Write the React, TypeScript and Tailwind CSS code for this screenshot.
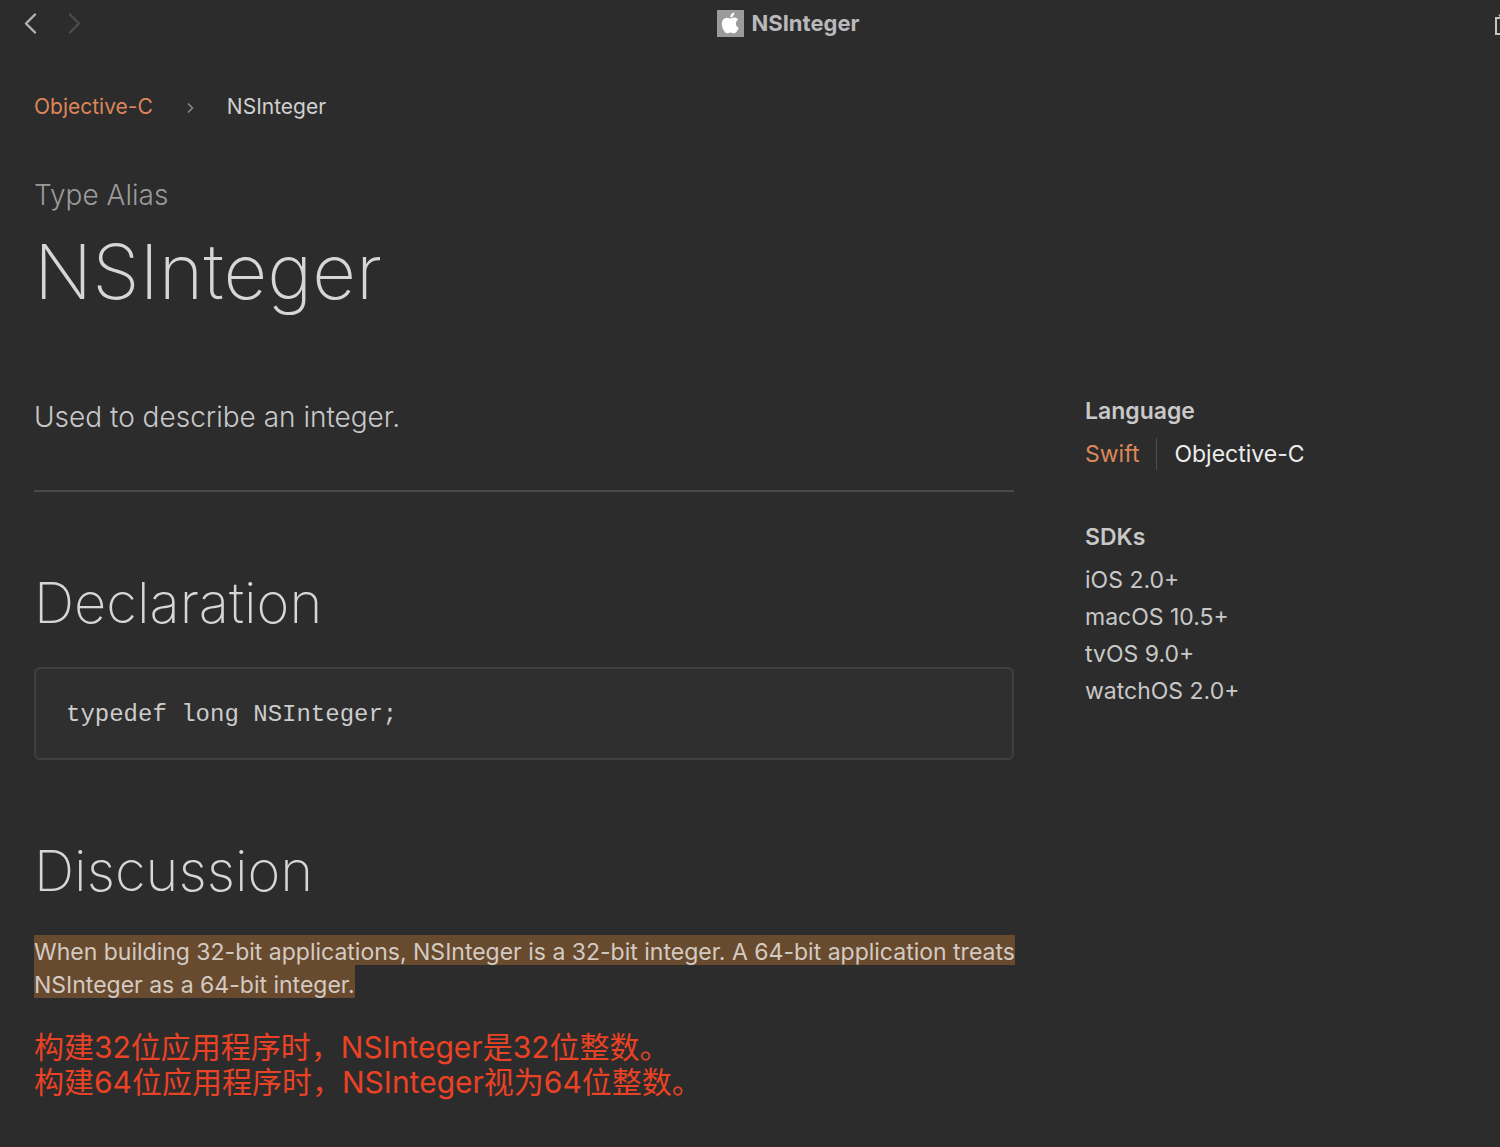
import React from 'react';

const sdks = ['iOS 2.0+', 'macOS 10.5+', 'tvOS 9.0+', 'watchOS 2.0+'];

const Chevron = ({ flip = false }: { flip?: boolean }) => (
    <svg width="14" height="22" viewBox="0 0 14 22" fill="none" stroke="currentColor" strokeWidth="2.4" strokeLinecap="round" strokeLinejoin="round">
        <path d={flip ? 'M2 1.5l9 9-9 9' : 'M11 1.5l-9 9 9 9'} />
    </svg>
);

const AppleBadge = () => (
    <svg width="27" height="27" viewBox="0 0 27 27" aria-hidden="true">
        <rect width="27" height="27" fill="#9b9b9b" />
        <path
            fill="#ffffff"
            transform="translate(2.9 2.6) scale(0.86)"
            d="M12.152 6.896c-.948 0-2.415-1.078-3.96-1.04-2.04.027-3.91 1.183-4.961 3.014-2.117 3.675-.546 9.103 1.519 12.09 1.013 1.454 2.208 3.09 3.792 3.039 1.52-.065 2.09-.987 3.935-.987 1.831 0 2.35.987 3.96.948 1.637-.026 2.676-1.48 3.676-2.948 1.156-1.688 1.636-3.325 1.662-3.415-.039-.013-3.182-1.221-3.22-4.857-.026-3.04 2.48-4.494 2.597-4.559-1.429-2.09-3.623-2.324-4.39-2.376-2-.156-3.675 1.09-4.61 1.09zM15.53 3.83c.843-1.012 1.4-2.427 1.245-3.83-1.207.052-2.662.805-3.532 1.818-.78.896-1.454 2.338-1.273 3.714 1.338.104 2.715-.688 3.559-1.701"
        />
    </svg>
);

const TitleBar = () => (
    <header className="flex h-[47px] items-center overflow-hidden">
        <div className="flex flex-1 items-center gap-[30px] pl-6">
            <button type="button" aria-label="Back" className="text-[#b4b4b4]">
                <Chevron />
            </button>
            <button type="button" aria-label="Forward" disabled className="text-[#4b4b4b]">
                <Chevron flip />
            </button>
        </div>
        <div className="ml-[52px] flex items-center gap-2 text-[22px] font-bold text-[#b9b8ba]">
            <AppleBadge />
            <span>NSInteger</span>
        </div>
        <div className="flex flex-1 justify-end">
            <button type="button" aria-label="Share" className="-mr-[19px] text-[#c4c4c4]">
                <svg width="24" height="28" viewBox="0 0 24 28" fill="none" stroke="currentColor" strokeWidth="2">
                    <path d="M9 8H1v16h22V8h-8M12 16V2M4 6l8-5 8 5" />
                </svg>
            </button>
        </div>
    </header>
);

const Breadcrumbs = () => (
    <nav className="flex items-center text-[21px] leading-8 text-[#d0d0d0]">
        <a href="#" className="text-[#dd8659]">Objective-C</a>
        <svg className="mx-8 mt-px" width="10" height="12" viewBox="0 0 10 12" fill="none" stroke="#8a8a8a" strokeWidth="1.5">
            <path d="M3 1.5L7.5 6 3 10.5" />
        </svg>
        <span>NSInteger</span>
    </nav>
);

const Sidebar = () => (
    <aside className="text-[23px] text-[#c8c8c8]">
        <section className="mb-[51px]">
            <h3 className="leading-8 font-semibold">Language</h3>
            <div className="mt-[11px] flex items-center leading-8">
                <a href="#" className="text-[#dd8659]">Swift</a>
                <span className="ml-[17px] border-l border-[#505050] pl-[17px] text-[#ececec]">Objective-C</span>
            </div>
        </section>
        <section>
            <h3 className="leading-8 font-semibold">SDKs</h3>
            <ul className="mt-[9px] leading-[37px]">
                {sdks.map(sdk => (
                    <li key={sdk}>{sdk}</li>
                ))}
            </ul>
        </section>
    </aside>
);

const App: React.FC = () => {
    return (
        <div className="min-h-screen bg-[#2c2c2c] pb-10 font-['Inter','Noto_Sans_CJK_SC',sans-serif]">
            <TitleBar />
            <main className="px-[34px] pt-11">
                <Breadcrumbs />

                <p className="mt-[52px] text-[28px] leading-10 font-light text-[#9a9a9a]">Type Alias</p>
                <h1 className="mt-2 text-[76px] leading-[96px] font-extralight text-[#d6d6d6]">NSInteger</h1>

                <div className="mt-[76px] grid grid-cols-[minmax(0,1fr)_381px] gap-[71px]">
                    <div>
                        <p className="text-[28px] leading-[44px] font-light text-[#c8c8c8]">Used to describe an integer.</p>
                        <hr className="mt-[51px] border-t-2 border-[#484848]" />

                        <h2 className="mt-[75px] text-[56px] leading-[72px] font-extralight text-[#d6d6d6]">Declaration</h2>
                        <pre className="mt-7 rounded-md border-2 border-[#404040] bg-[#2f2f2f] px-[30px] pt-[30px] pb-[27px] font-['Liberation_Mono',monospace] text-[24px] leading-8 text-[#cccccc]">
                            <code>typedef long NSInteger;</code>
                        </pre>

                        <h2 className="mt-[75px] text-[56px] leading-[72px] font-extralight text-[#d6d6d6]">Discussion</h2>
                        <p className="mt-7 text-[23px] leading-[26px] text-[#d3cbc3]">
                            <span className="block w-fit min-w-full bg-[#684a2e] pt-1 lg:whitespace-nowrap">
                                When building 32-bit applications, NSInteger is a 32-bit integer. A 64-bit application treats
                            </span>
                            <span className="block w-fit bg-[#684a2e] pt-[7px]">NSInteger as a 64-bit integer.</span>
                        </p>

                        <p lang="zh-CN" className="mt-8 text-[30px] leading-[35px] text-[#ea4225]">
                            构建32位应用程序时，NSInteger是32位整数。
                            <br />
                            构建64位应用程序时，NSInteger视为64位整数。
                        </p>
                    </div>
                    <Sidebar />
                </div>
            </main>
        </div>
    );
};

export default App;
